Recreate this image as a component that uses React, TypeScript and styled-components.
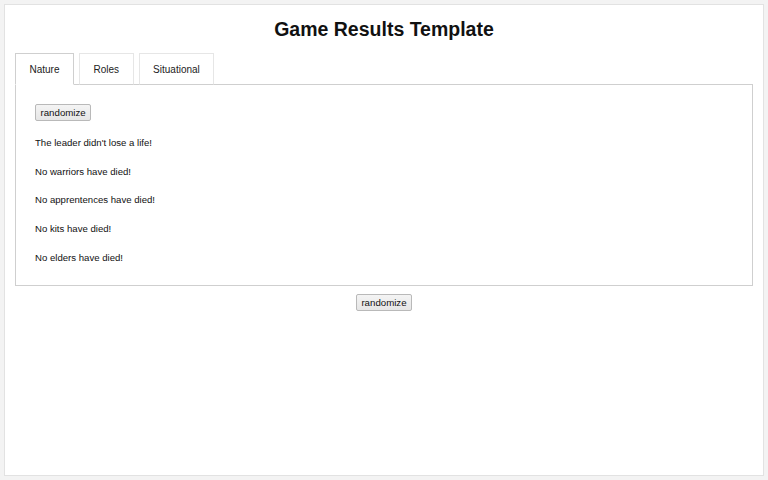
import React, {useState} from 'react';
import styled, {createGlobalStyle} from 'styled-components';

const GlobalStyle = createGlobalStyle`
    html, body {
        margin: 0;
        padding: 0;
        background: #f3f3f3;
        font-family: "Liberation Sans", Arial, sans-serif;
        color: #111;
    }
`;

const Page = styled.div`
    box-sizing: border-box;
    height: 480px;
    padding: 4px;
`;

const Card = styled.div`
    box-sizing: border-box;
    height: 100%;
    background: #fff;
    border: 1px solid #e2e2e2;
    padding: 12px 10px 10px 10px;
    display: flex;
    flex-direction: column;
`;

const Title = styled.h1`
    margin: 0 0 12px 0;
    text-align: center;
    font-size: 19.5px;
    font-weight: 700;
    line-height: 24px;
    color: #111;
`;

const TabList = styled.div`
    display: flex;
    gap: 5px;
    margin-bottom: -1px;
    position: relative;
`;

const Tab = styled.button<{$active: boolean}>`
    font-family: inherit;
    font-size: 10px;
    color: #222;
    height: 32px;
    padding: 0 13.5px;
    background: #fff;
    border: 1px solid ${(props) => (props.$active ? '#cfcfcf' : '#e6e6e6')};
    border-bottom: 1px solid ${(props) => (props.$active ? '#fff' : '#cfcfcf')};
    cursor: pointer;
`;

const Panel = styled.div`
    border: 1px solid #cfcfcf;
    padding: 19px 19px 20px 19px;
    display: flex;
    flex-direction: column;
    align-items: flex-start;
`;

const Button = styled.button`
    font-family: inherit;
    font-size: 9.7px;
    color: #111;
    height: 17px;
    padding: 0 4.5px;
    background: linear-gradient(#f4f4f4, #e6e6e6);
    border: 1px solid #b9b9b9;
    border-radius: 2px;
    cursor: pointer;
`;

const Result = styled.p`
    margin: 16px 0 0 0;
    font-size: 9.6px;
    line-height: 12.7px;
    color: #111;
`;

const Footer = styled.div`
    display: flex;
    justify-content: center;
    padding-top: 8px;
`;

const tabs = ['Nature', 'Roles', 'Situational'];

const results = [
    "The leader didn't lose a life!",
    'No warriors have died!',
    'No apprentences have died!',
    'No kits have died!',
    'No elders have died!',
];

export default function App(): JSX.Element {
    const [active, setActive] = useState('Nature');

    return (
        <>
            <GlobalStyle />
            <Page>
                <Card>
                    <Title>Game Results Template</Title>
                    <TabList>
                        {tabs.map((t) => (
                            <Tab key={t} $active={t === active} onClick={() => setActive(t)}>
                                {t}
                            </Tab>
                        ))}
                    </TabList>
                    <Panel>
                        <Button>randomize</Button>
                        {results.map((r) => (
                            <Result key={r}>{r}</Result>
                        ))}
                    </Panel>
                    <Footer>
                        <Button>randomize</Button>
                    </Footer>
                </Card>
            </Page>
        </>
    );
}
